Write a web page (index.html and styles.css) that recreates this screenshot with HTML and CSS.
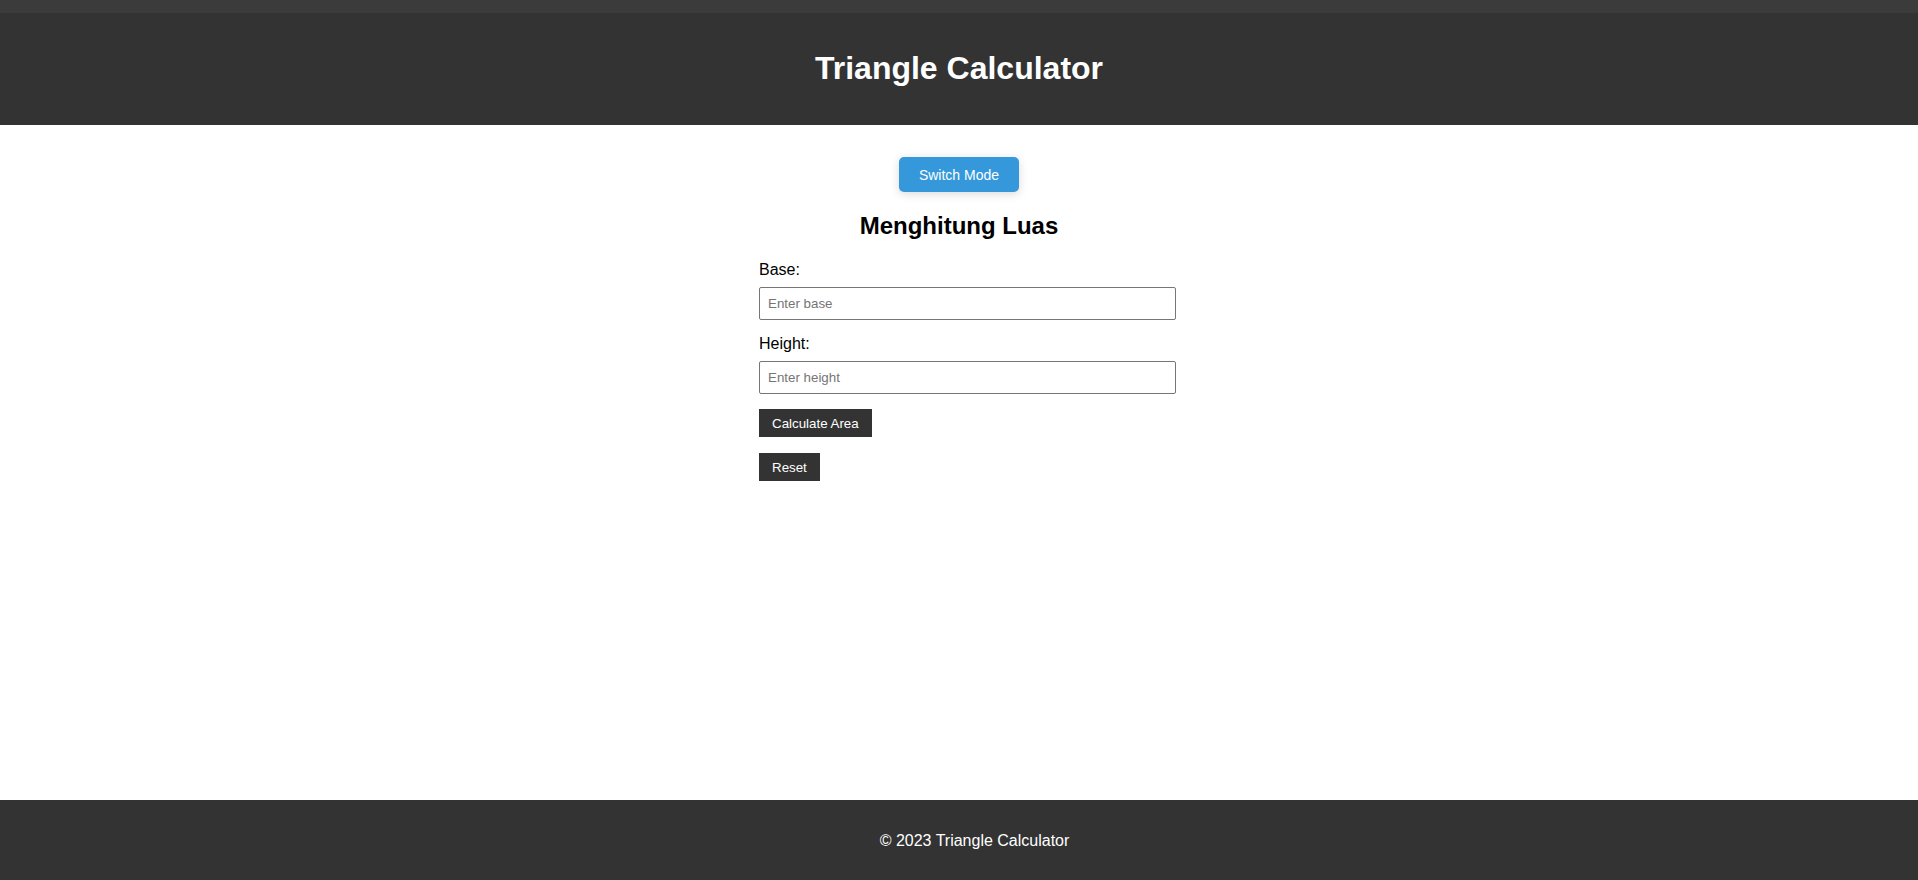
FILE: index.html
```html
<!DOCTYPE html>
<html lang="id">
<head>
<meta charset="utf-8">
<title>Triangle Calculator</title>
<link rel="stylesheet" href="styles.css">
</head>
<body>
<div class="page">
  <div class="topstrip"></div>
  <header class="site-header">
    <h1 class="site-title">Triangle Calculator</h1>
  </header>
  <main class="main">
    <button class="switch-btn" type="button">Switch Mode</button>
    <section class="calc">
      <h2 class="calc-title">Menghitung Luas</h2>
      <label class="field-label" for="base">Base:</label>
      <input class="field-input" id="base" type="text" placeholder="Enter base">
      <label class="field-label" for="height">Height:</label>
      <input class="field-input" id="height" type="text" placeholder="Enter height">
      <button class="action-btn" type="button">Calculate Area</button>
      <button class="action-btn" type="button">Reset</button>
    </section>
  </main>
  <footer class="site-footer">
    <p class="footer-text">&copy; 2023 Triangle Calculator</p>
  </footer>
</div>
</body>
</html>
```
FILE: styles.css
```css
* {
  box-sizing: border-box;
}

html, body {
  margin: 0;
  padding: 0;
  background: #ffffff;
  font-family: "Liberation Sans", Arial, sans-serif;
  color: #000000;
}

.page {
  display: flex;
  flex-direction: column;
  min-height: 100vh;
  overflow: hidden;
}

.topstrip {
  height: 13px;
  background: #3b3b3b;
}

.site-header {
  height: 112px;
  background: #333333;
  padding-top: 37px;
  text-align: center;
}

.site-title {
  margin: 0;
  font-size: 32px;
  font-weight: bold;
  line-height: normal;
  color: #ffffff;
}

.main {
  flex: 1;
  display: flex;
  flex-direction: column;
  align-items: center;
  padding-top: 32px;
}

.switch-btn {
  font-family: "Liberation Sans", Arial, sans-serif;
  font-size: 14px;
  line-height: normal;
  height: 35px;
  padding: 0 20px;
  background: #3498db;
  color: #ffffff;
  border: none;
  border-radius: 5px;
  box-shadow: 0 2px 10px rgba(0, 0, 0, 0.15);
  cursor: pointer;
}

.calc {
  width: 400px;
  display: flex;
  flex-direction: column;
  align-items: flex-start;
}

.calc-title {
  align-self: stretch;
  text-align: center;
  margin: 20px 0 21px;
  font-size: 24px;
  font-weight: bold;
  line-height: normal;
}

.field-label {
  display: block;
  font-size: 16px;
  line-height: normal;
  margin-bottom: 8px;
}

.field-input {
  width: 417px;
  height: 33px;
  padding: 8px;
  border: 1px solid #767676;
  border-radius: 2px;
  font-family: "Liberation Sans", Arial, sans-serif;
  font-size: 13.333px;
  margin: 0 0 15px;
  background: #ffffff;
}

.field-input::placeholder {
  color: #757575;
}

.action-btn {
  display: block;
  font-family: "Liberation Sans", Arial, sans-serif;
  font-size: 13.333px;
  line-height: normal;
  height: 28px;
  padding: 0 13px;
  background: #333333;
  color: #ffffff;
  border: none;
  border-radius: 0;
  margin: 0 0 16px;
  cursor: pointer;
}

.site-footer {
  height: 80px;
  background: #333333;
  padding: 32px 0 0 31px;
  text-align: center;
}

.footer-text {
  margin: 0;
  font-size: 16px;
  line-height: normal;
  color: #ffffff;
}
```
